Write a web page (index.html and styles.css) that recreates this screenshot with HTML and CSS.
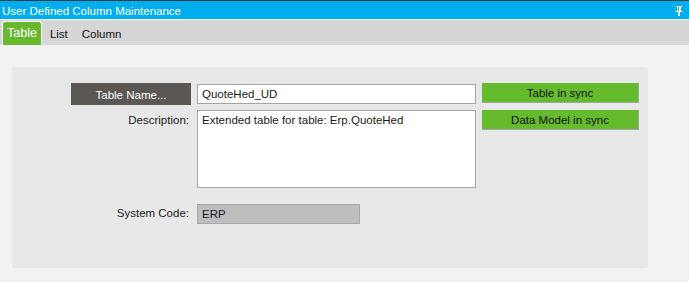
FILE: index.html
```html
<!DOCTYPE html>
<html lang="en">
<head>
  <meta charset="UTF-8">
  <title>User Defined Column Maintenance</title>
  <link rel="stylesheet" href="styles.css">
</head>
<body>
  <div class="titlebar">
    <span class="title">User Defined Column Maintenance</span>
    <svg class="pin" width="8" height="10" viewBox="0 0 8 10">
      <path d="M1 0h6v1h-1v4h2v1h-3v4h-2v-4h-3v-1h2v-4h-1z" fill="#fff"/>
      <rect x="3" y="1" width="1" height="4" fill="#00aeef"/>
    </svg>
  </div>
  <div class="tabs">
    <div class="tab active">Table</div>
    <div class="tab">List</div>
    <div class="tab">Column</div>
  </div>

  <div class="content">
    <div class="panel">
      <div class="row">
        <button class="dark-btn">Table Name...</button>
        <input type="text" class="field" value="QuoteHed_UD">
        <div class="status">Table in sync</div>
      </div>
      <div class="row">
        <label class="lbl">Description:</label>
        <textarea class="field memo">Extended table for table: Erp.QuoteHed</textarea>
        <div class="status">Data Model in sync</div>
      </div>
      <div class="row sys">
        <label class="lbl">System Code:</label>
        <div class="field readonly">ERP</div>
      </div>
    </div>
  </div>
</body>
</html>
```

FILE: styles.css
```css
body {
  margin: 0;
  font-family: "Liberation Sans", Arial, sans-serif;
  font-size: 11.5px;
  color: #1a1a1a;
  background-color: #f2f2f4;
  height: 282px;
  overflow: hidden;
}

.titlebar {
  background-color: #00aeef;
  border-top: 1px solid #3d3d3d;
  display: flex;
  align-items: center;
  justify-content: space-between;
  padding: 0 6px 0 2px;
  box-sizing: border-box;
  height: 19px;
}

.title {
  color: #fff;
  font-size: 11.5px;
  padding-top: 1px;
}

.pin {
  margin-top: 1px;
}

.tabs {
  margin-top: 1px;
  height: 25px;
  background-color: #d6d6d6;
  display: flex;
  align-items: flex-end;
  padding-left: 2px;
  box-sizing: border-box;
}

.tab {
  height: 23px;
  line-height: 24px;
  padding: 0 6px;
  margin-right: 2px;
  color: #111;
}

.tab.active {
  background-color: #66b92c;
  color: #fff;
  border: 1px solid #fff;
  border-bottom: 0;
  border-radius: 3px 3px 0 0;
  padding: 0 4px;
  margin-right: 2px;
  font-size: 12.5px;
  line-height: 22px;
}

.content {
  padding: 22px 41px 0 12px;
}

.panel {
  background-color: #e8e8e8;
  border-radius: 3px;
  height: 201px;
  padding-top: 16px;
  box-sizing: border-box;
}

.row {
  display: flex;
  align-items: flex-start;
  margin-bottom: 5px;
}

.dark-btn {
  margin-left: 59px;
  width: 120px;
  height: 22px;
  background-color: #5a5755;
  color: #fff;
  border: 0;
  font-family: inherit;
  font-size: 11.5px;
  padding: 1px 0 0;
}

.lbl {
  width: 179px;
  box-sizing: border-box;
  padding-right: 2px;
  text-align: right;
  padding-top: 4px;
}

.field {
  margin-left: 6px;
  margin-top: 1px;
  width: 279px;
  height: 20px;
  box-sizing: border-box;
  border: 1px solid #a4a4a4;
  background: #fff;
  font-family: inherit;
  font-size: 11.5px;
  color: #1a1a1a;
  padding: 2px 4px;
  outline: 0;
}

.memo {
  height: 78px;
  resize: none;
  margin-top: 0;
  padding: 3px 4px;
}

.status {
  margin-left: 6px;
  width: 157px;
  height: 20px;
  box-sizing: border-box;
  background-color: #66bb2c;
  border-right: 1px solid #a6a6a6;
  border-bottom: 1px solid #a6a6a6;
  text-align: center;
  line-height: 20px;
  color: #111;
}

.sys {
  margin-top: 15px;
}

.sys .lbl {
  padding-top: 4px;
}

.readonly {
  width: 163px;
  background-color: #bebebe;
  border-color: #a8a8a8;
  line-height: 14px;
}
```
